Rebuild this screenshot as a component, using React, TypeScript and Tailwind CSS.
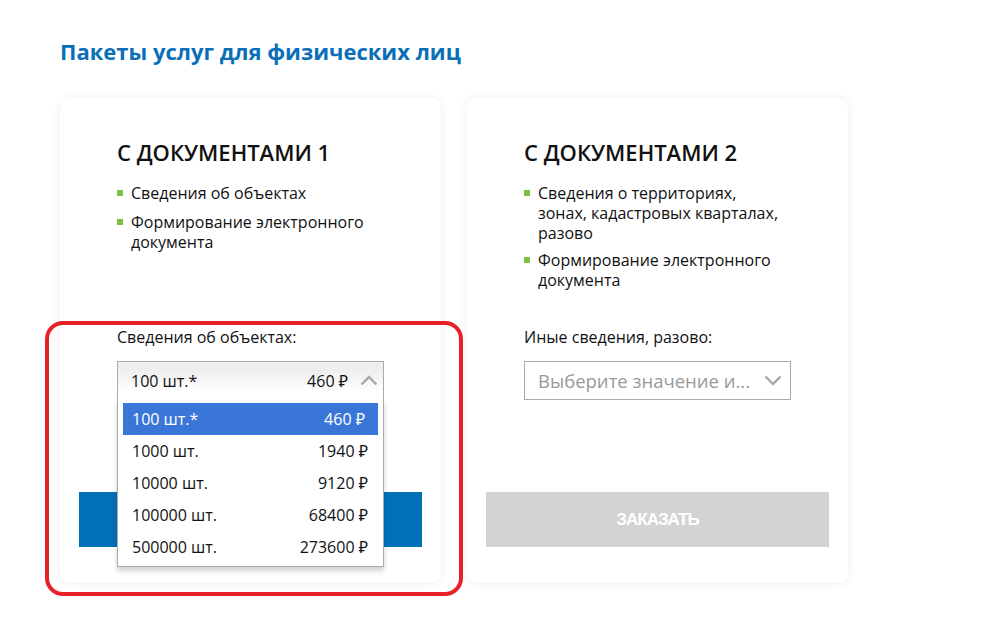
import React from "react";

const font = { fontFamily: '"Open Sans", "Noto Sans", sans-serif' };

function Bullet({ children }: { children: React.ReactNode }) {
  return (
    <li className="flex items-start">
      <span className="mt-[7px] mr-[8px] h-[6px] w-[6px] shrink-0 bg-[#7cc144]" />
      <span className="text-[16px] leading-[20px] text-[#111]">{children}</span>
    </li>
  );
}

function ChevronUp() {
  return (
    <svg width="18" height="11" viewBox="0 0 18 11" fill="none">
      <path d="M1.5 9.5 L9 2 L16.5 9.5" stroke="#a7a7a7" strokeWidth="2.4" />
    </svg>
  );
}

function ChevronDown() {
  return (
    <svg width="18" height="11" viewBox="0 0 18 11" fill="none">
      <path d="M1.5 1.5 L9 9 L16.5 1.5" stroke="#a7a7a7" strokeWidth="2.4" />
    </svg>
  );
}

const options = [
  ["100 шт.*", "460 ₽"],
  ["1000 шт.", "1940 ₽"],
  ["10000 шт.", "9120 ₽"],
  ["100000 шт.", "68400 ₽"],
  ["500000 шт.", "273600 ₽"],
];

export default function App() {
  return (
    <div className="relative min-h-[621px] w-[999px] bg-white" style={font}>
      <div className="pl-[60px] pt-[34px]">
        <h1 className="text-[22px] font-bold leading-[34px] text-[#0b6fb8]">
          Пакеты услуг для физических лиц
        </h1>
        <div className="mt-[30px] flex gap-[26px]">
          {/* Card 1 */}
          <div className="relative flex h-[485px] w-[381px] flex-col rounded-[10px] bg-white pt-[39px] shadow-[0_0_10px_rgba(0,0,0,0.07)]">
            <div className="px-[57px]">
              <h2 className="text-[22px] font-semibold leading-[30px] text-[#111]">
                С ДОКУМЕНТАМИ 1
              </h2>
              <ul className="mt-[16px] flex h-[144px] flex-col gap-[9px]">
                <Bullet>Сведения об объектах</Bullet>
                <Bullet>
                  Формирование электронного
                  <br />
                  документа
                </Bullet>
              </ul>
              <div className="h-[165px]">
                <div className="text-[16px] leading-[20px] text-[#111]">Сведения об объектах:</div>
                <div className="relative mt-[14px] w-[267px]">
                  <div className="flex h-[39px] items-center border border-[#aaaaaa] bg-[linear-gradient(#eeeeee_20%,#ffffff_80%)] pl-[13px] pr-[5px] text-[16px] text-[#111]">
                    <span className="flex-1">100 шт.*</span>
                    <span className="mr-[12px]">460 ₽</span>
                    <ChevronUp />
                  </div>
                  <div className="absolute left-0 top-[38px] z-10 w-[267px] border border-t-0 border-[#aaaaaa] bg-white px-[5px] pb-[3px] pt-[4px] shadow-[0_4px_5px_rgba(0,0,0,0.18)]">
                    {options.map(([a, b], i) => (
                      <div
                        key={a}
                        className={
                          i === 0
                            ? "flex h-[32px] items-center bg-[#3a76d8] pl-[9px] pr-[13px] text-[16px] text-white"
                            : "flex h-[32px] items-center pl-[9px] pr-[10px] text-[16px] text-[#111]"
                        }
                      >
                        <span className="flex-1">{a}</span>
                        <span>{b}</span>
                      </div>
                    ))}
                  </div>
                </div>
              </div>
            </div>
            <div className="px-[19px]">
              <button className="h-[55px] w-full bg-[#0070b8] text-[17px] font-bold tracking-[-1px] text-white" style={{ fontFamily: '"Liberation Sans", Arial, sans-serif' }}>
                ЗАКАЗАТЬ
              </button>
            </div>
          </div>

          {/* Card 2 */}
          <div className="relative flex h-[485px] w-[381px] flex-col rounded-[10px] bg-white pt-[39px] shadow-[0_0_10px_rgba(0,0,0,0.07)]">
            <div className="px-[57px]">
              <h2 className="text-[22px] font-semibold leading-[30px] text-[#111]">
                С ДОКУМЕНТАМИ 2
              </h2>
              <ul className="mt-[16px] flex h-[144px] flex-col gap-[7px]">
                <Bullet>
                  Сведения о территориях,
                  <br />
                  зонах, кадастровых кварталах,
                  <br />
                  разово
                </Bullet>
                <Bullet>
                  Формирование электронного
                  <br />
                  документа
                </Bullet>
              </ul>
              <div className="h-[165px]">
                <div className="text-[16px] leading-[20px] text-[#111]">Иные сведения, разово:</div>
                <div className="mt-[14px] flex h-[39px] w-[267px] items-center border border-[#aaaaaa] bg-white pl-[13px] pr-[8px] text-[18.5px] text-[#999]">
                  <span className="flex-1 whitespace-nowrap overflow-hidden">Выберите значение и...</span>
                  <span className="ml-[8px]"><ChevronDown /></span>
                </div>
              </div>
            </div>
            <div className="px-[19px]">
              <button className="h-[55px] w-full bg-[#d3d3d3] text-[17px] font-bold tracking-[-1px] text-white" style={{ fontFamily: '"Liberation Sans", Arial, sans-serif' }}>
                ЗАКАЗАТЬ
              </button>
            </div>
          </div>
        </div>
      </div>
      {/* annotation */}
      <div className="pointer-events-none absolute left-[45px] top-[321px] z-20 h-[275px] w-[418px] rounded-[18px] border-[4px] border-[#e8202a]" />
    </div>
  );
}
